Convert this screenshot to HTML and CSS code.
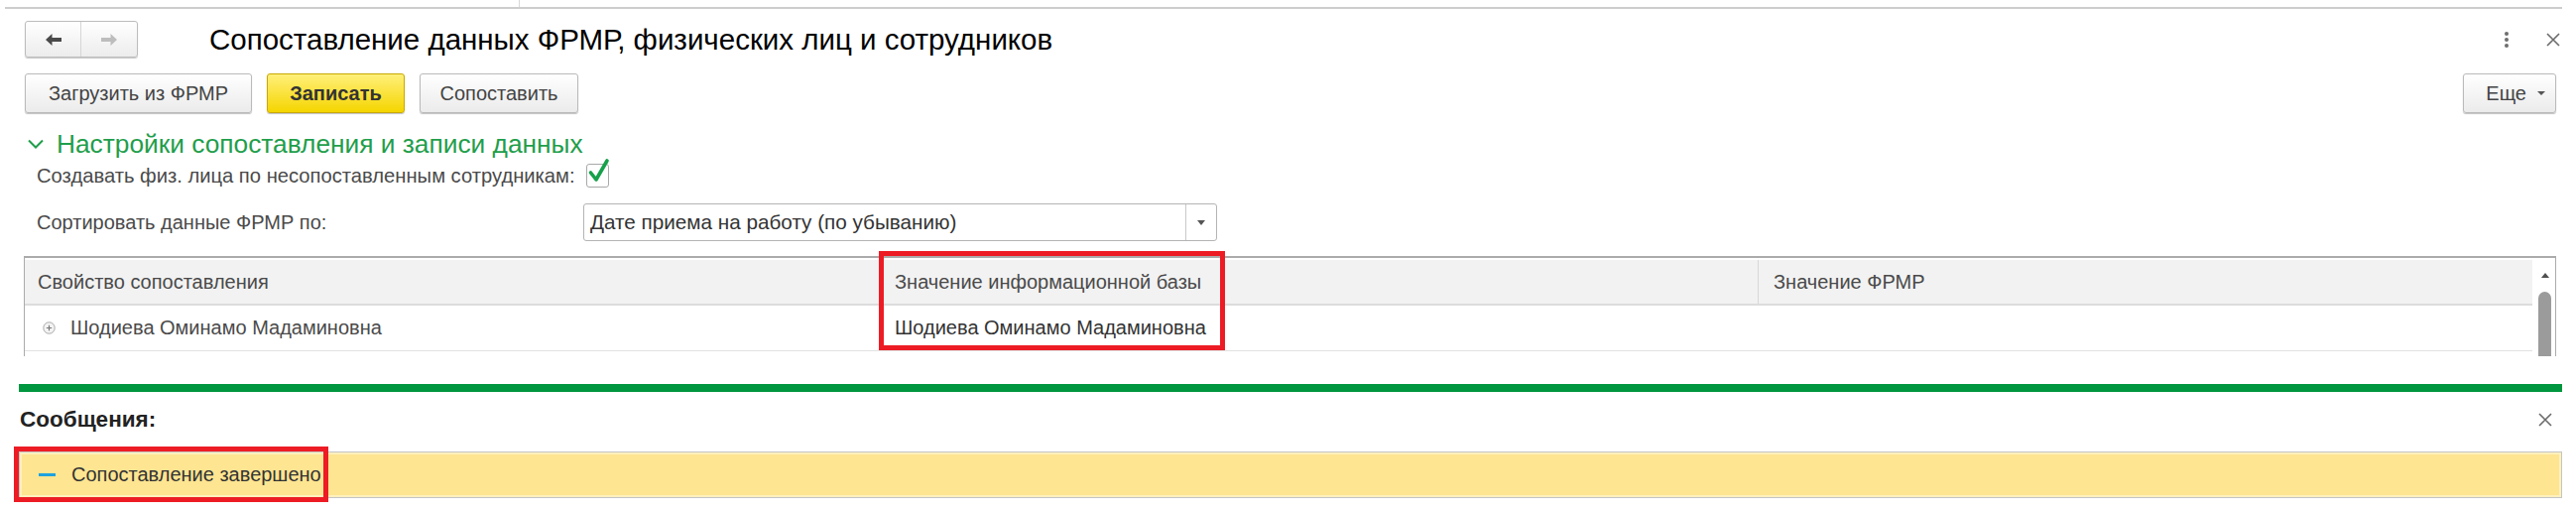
FILE: index.html
```html
<!DOCTYPE html>
<html lang="ru">
<head>
<meta charset="utf-8">
<title>Сопоставление данных ФРМР</title>
<link rel="stylesheet" href="styles.css">
</head>
<body>
<div class="page">
  <div class="topline"><span class="tick"></span></div>

  <div class="header">
    <div class="nav">
      <button class="nav-btn nav-back" aria-label="Назад">
        <svg width="16" height="12" viewBox="0 0 16 12"><path d="M0 6 L6.5 0 V4 H16 V8 H6.5 V12 Z" fill="#4a4a4a"/></svg>
      </button>
      <button class="nav-btn nav-fwd" aria-label="Вперед">
        <svg width="16" height="12" viewBox="0 0 16 12"><path d="M16 6 L9.5 0 V4 H0 V8 H9.5 V12 Z" fill="#bdbdbd"/></svg>
      </button>
    </div>
    <h1 class="title">Сопоставление данных ФРМР, физических лиц и сотрудников</h1>
    <div class="win-actions">
      <span class="kebab"><i></i><i></i><i></i></span>
      <svg class="close" width="14" height="14" viewBox="0 0 14 14"><path d="M1 1 L13 13 M13 1 L1 13" stroke="#6b6b6b" stroke-width="1.6"/></svg>
    </div>
  </div>

  <div class="toolbar">
    <button class="btn btn-load">Загрузить из ФРМР</button>
    <button class="btn btn-primary">Записать</button>
    <button class="btn btn-match">Сопоставить</button>
    <div class="spacer"></div>
    <button class="btn btn-more">Еще <svg width="10" height="6" viewBox="0 0 10 6"><path d="M1 1 H9 L5 5 Z" fill="#555"/></svg></button>
  </div>

  <div class="group-title">
    <svg class="chevron" width="16" height="10" viewBox="0 0 16 10"><path d="M1 1.5 L8 8.5 L15 1.5" fill="none" stroke="#1f9e4b" stroke-width="2"/></svg>
    <span>Настройки сопоставления и записи данных</span>
  </div>

  <div class="field-row row-check">
    <span class="label">Создавать физ. лица по несопоставленным сотрудникам:</span>
    <span class="checkbox">
      <svg width="24" height="28" viewBox="0 0 24 28"><path d="M3.5 15 L9 22 L20 3" fill="none" stroke="#17a04a" stroke-width="3.6" stroke-linecap="round" stroke-linejoin="round"/></svg>
    </span>
  </div>

  <div class="field-row row-select">
    <span class="label">Сортировать данные ФРМР по:</span>
    <div class="select">
      <span class="select-value">Дате приема на работу (по убыванию)</span>
      <span class="select-btn"><svg width="8" height="5" viewBox="0 0 8 5"><path d="M0 0 H8 L4 5 Z" fill="#555"/></svg></span>
    </div>
  </div>

  <div class="table">
    <div class="grid">
      <div class="row head">
        <div class="cell c1">Свойство сопоставления</div>
        <div class="cell c2">Значение информационной базы</div>
        <div class="cell c3">Значение ФРМР</div>
      </div>
      <div class="row data">
        <div class="cell c1">
          <svg class="expand" width="13" height="13" viewBox="0 0 13 13"><circle cx="6.5" cy="6.5" r="5.7" fill="#f4f4f4" stroke="#a8a8a8" stroke-width="1"/><path d="M3.8 6.5 H9.2 M6.5 3.8 V9.2" stroke="#777" stroke-width="1.2"/></svg>
          <span>Шодиева Оминамо Мадаминовна</span>
        </div>
        <div class="cell c2">Шодиева Оминамо Мадаминовна</div>
        <div class="cell c3"></div>
      </div>
      <div class="row data"></div>
    </div>
    <div class="scroll">
      <svg class="scroll-up" width="10" height="6" viewBox="0 0 10 6"><path d="M0 6 L5 0 L10 6 Z" fill="#505050"/></svg>
      <div class="thumb"></div>
    </div>
  </div>

  <div class="divider"></div>

  <div class="messages-head">
    <span class="messages-title">Сообщения:</span>
    <svg class="close" width="14" height="14" viewBox="0 0 14 14"><path d="M1 1 L13 13 M13 1 L1 13" stroke="#6b6b6b" stroke-width="1.6"/></svg>
  </div>

  <div class="message">
    <span class="dash"></span>
    <span>Сопоставление завершено</span>
  </div>
</div>

<div class="mark mark-table"></div>
<div class="mark mark-message"></div>
</body>
</html>
```

FILE: styles.css
```css
* { box-sizing: border-box; }

html, body {
  margin: 0;
  padding: 0;
  background: #fff;
}

body {
  position: relative;
  width: 2597px;
  height: 516px;
  overflow: hidden;
  font-family: "Liberation Sans", Arial, sans-serif;
  font-size: 20px;
  color: #4a4a4a;
}

button {
  font-family: inherit;
}

.page {
  display: flex;
  flex-direction: column;
}

/* top line */
.topline {
  position: relative;
  margin: 7px 14px 0 5px;
  height: 2px;
  background: #cdcdcd;
}
.tick {
  position: absolute;
  left: 518px;
  top: -7px;
  width: 1px;
  height: 7px;
  background: #d8d8d8;
}

/* header */
.header {
  display: flex;
  align-items: center;
  height: 37px;
  margin: 12px 20px 0 25px;
}

.nav {
  display: flex;
  height: 37px;
  border: 1px solid #bcbcbc;
  border-radius: 3px;
  background: linear-gradient(#ffffff, #ececec);
  box-shadow: 0 1px 1px rgba(0,0,0,0.22);
}
.nav-btn {
  width: 56px;
  height: 100%;
  padding: 0;
  border: 0;
  background: transparent;
  display: flex;
  align-items: center;
  justify-content: center;
}
.nav-back { border-right: 1px solid #d6d6d6; }

.title {
  margin: 0 0 0 72px;
  font-size: 29.5px;
  font-weight: normal;
  color: #000;
  line-height: 37px;
  flex: 1;
}

.win-actions {
  display: flex;
  align-items: center;
  gap: 38px;
  margin-right: -4px;
}
.kebab {
  display: flex;
  flex-direction: column;
  gap: 2px;
}
.kebab i {
  display: block;
  width: 4px;
  height: 4px;
  border-radius: 50%;
  background: #6e6e6e;
}

/* toolbar */
.toolbar {
  display: flex;
  align-items: center;
  gap: 15px;
  margin: 16px 20px 0 25px;
  height: 40px;
}
.spacer { flex: 1; }

.btn {
  height: 40px;
  padding: 0 18px;
  border: 1px solid #bababa;
  border-radius: 3px;
  background: linear-gradient(#ffffff, #ebebeb);
  box-shadow: 0 1px 1px rgba(0,0,0,0.25);
  font-size: 20px;
  color: #444;
  white-space: nowrap;
}
.btn-load { width: 229px; }
.btn-primary {
  width: 139px;
  background: linear-gradient(#fff07a, #f5d500);
  border-color: #c9a900;
  font-weight: bold;
  color: #333;
}
.btn-match { width: 160px; }
.btn-more {
  width: 94px;
  display: flex;
  align-items: center;
  justify-content: flex-end;
  gap: 10px;
  padding-right: 9px;
}

/* group title */
.group-title {
  display: flex;
  align-items: center;
  margin: 16px 0 0 28px;
  height: 30px;
  color: #1f9e4b;
  font-size: 26.3px;
}
.chevron { margin-right: 13px; }

/* fields */
.field-row {
  display: flex;
  align-items: center;
  margin-left: 37px;
}
.row-check {
  margin-top: 5px;
  height: 24px;
}
.row-check .label { width: 554px; font-size: 20.2px; }
.checkbox {
  position: relative;
  width: 23px;
  height: 24px;
  border: 1px solid #a9a9a9;
  border-radius: 3px;
  background: #fff;
}
.checkbox svg {
  position: absolute;
  left: 0px;
  top: -7px;
}

.row-select {
  margin-top: 16px;
  height: 38px;
}
.row-select .label { width: 551px; }
.select {
  display: flex;
  width: 639px;
  height: 38px;
  border: 1px solid #b4b4b4;
  border-radius: 3px;
  background: #fff;
}
.select-value {
  flex: 1;
  display: flex;
  align-items: center;
  padding-left: 6px;
  color: #333;
  font-size: 20.7px;
}
.select-btn {
  width: 31px;
  border-left: 1px solid #c8c8c8;
  display: flex;
  align-items: center;
  justify-content: center;
}

/* table */
.table {
  display: flex;
  margin: 15px 20px 0 24px;
  height: 101px;
  overflow: hidden;
  border: 1px solid #ababab;
  border-top-width: 2px;
  border-bottom: 0;
}
.grid {
  flex: 1;
  padding-top: 2px;
}
.row {
  display: grid;
  grid-template-columns: 863px 884px 1fr;
}
.row.head {
  height: 46px;
  background: #f2f2f2;
  border-bottom: 2px solid #dcdcdc;
}
.row.data {
  height: 46px;
  border-bottom: 1px solid #e2e2e2;
}
.cell {
  display: flex;
  align-items: center;
  padding-left: 13px;
  color: #4a4a4a;
  white-space: nowrap;
}
.head .c3 { border-left: 1px solid #d8d8d8; padding-left: 15px; }
.c2 { padding-left: 14px; }
.data .c1 { padding-left: 18px; }
.expand { margin-right: 15px; }
.data .c2 { color: #333; }

.scroll {
  position: relative;
  width: 23px;
  display: flex;
  flex-direction: column;
  align-items: center;
}
.scroll-up { margin-top: 15px; margin-left: 2px; }
.thumb {
  margin-top: 14px;
  margin-left: 2px;
  width: 13px;
  height: 80px;
  border-radius: 7px 7px 0 0;
  background: #9b9b9b;
}

/* messages */
.divider {
  margin: 28px 14px 0 19px;
  height: 8px;
  background: #00963f;
}

.messages-head {
  display: flex;
  align-items: center;
  justify-content: space-between;
  margin: 12px 24px 0 20px;
  height: 32px;
}
.messages-title {
  font-weight: bold;
  font-size: 22.5px;
  color: #222;
}

.message {
  display: flex;
  align-items: center;
  margin: 16px 14px 0 19px;
  height: 47px;
  border: 1px solid #c4c4c4;
  background: #fee591;
  box-shadow: inset 0 0 0 2px #fff1bd;
  color: #333;
}
.dash {
  width: 17px;
  height: 3px;
  background: #1ea2df;
  margin: 0 16px 0 19px;
}

/* annotation marks */
.mark {
  position: absolute;
  border: 5px solid #ed1c24;
}
.mark-table {
  left: 886px;
  top: 253px;
  width: 349px;
  height: 100px;
}
.mark-message {
  left: 14px;
  top: 450px;
  width: 317px;
  height: 56px;
}
```
